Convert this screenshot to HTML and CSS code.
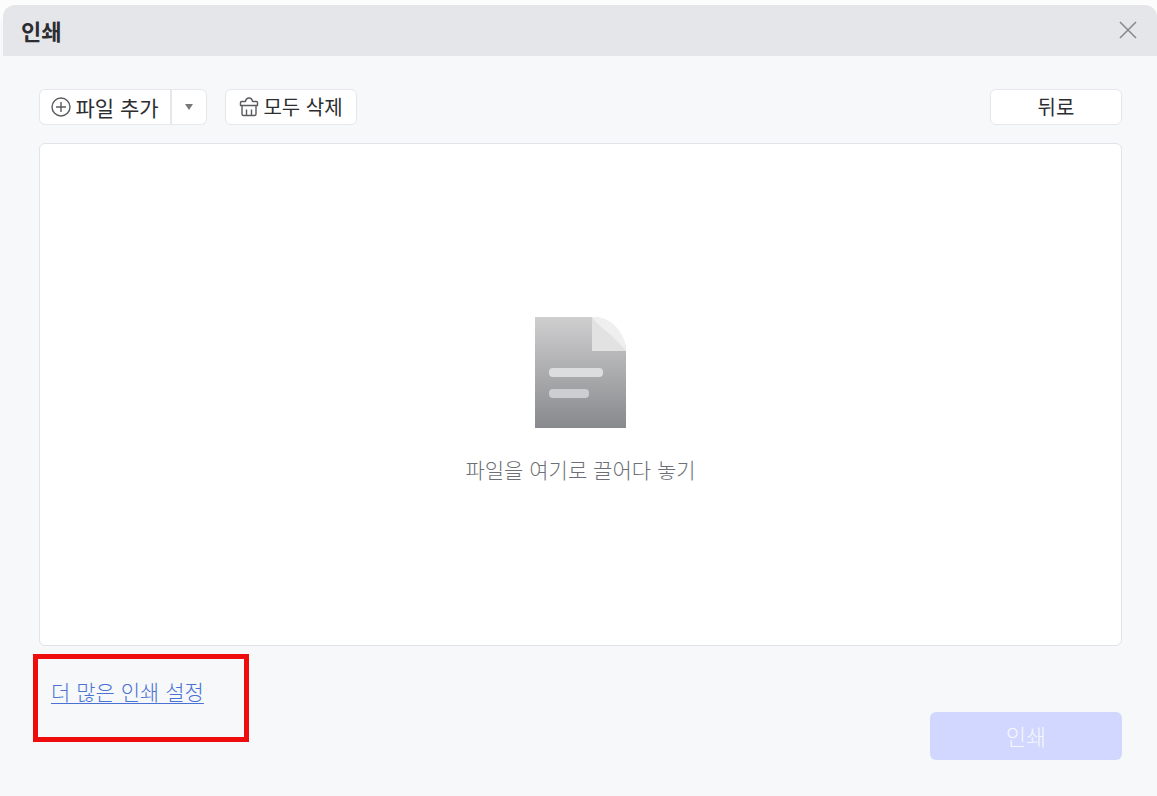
FILE: index.html
```html
<!DOCTYPE html>
<html lang="ko">
<head>
    <meta charset="UTF-8">
    <meta name="viewport" content="width=device-width, initial-scale=1.0">
    <title>인쇄</title>
    <link rel="stylesheet" href="styles.css">
</head>
<body>
    <div class="dialog">
        <!-- Title bar -->
        <header class="title-bar">
            <h1>인쇄</h1>
            <button class="close-btn" type="button" aria-label="닫기">
                <svg width="18" height="18" viewBox="0 0 18 18" fill="none" stroke="#88898d" stroke-width="1.6">
                    <path d="M1 1 L17 17 M17 1 L1 17"/>
                </svg>
            </button>
        </header>

        <!-- Toolbar -->
        <div class="toolbar">
            <div class="split-btn">
                <button class="btn add-btn" type="button">
                    <svg width="20" height="20" viewBox="0 0 20 20" fill="none" stroke="#5a5b5f" stroke-width="1.4">
                        <circle cx="10" cy="10" r="9"/>
                        <path d="M10 5 V15 M5 10 H15"/>
                    </svg>
                    파일 추가
                </button>
                <button class="btn arrow-btn" type="button" aria-label="추가 옵션">
                    <svg width="10" height="6" viewBox="0 0 10 6" fill="#77787b">
                        <path d="M1 0 H9 L5 6 Z"/>
                    </svg>
                </button>
            </div>
            <button class="btn clear-btn" type="button">
                <svg width="20" height="20" viewBox="0 0 20 20" fill="none" stroke="#5a5b5f" stroke-width="1.4" stroke-linejoin="round">
                    <path d="M1.5 8.5 V5.5 Q1.5 4.5 2.5 4.5 H6.5 Q7 1 10 1 Q13 1 13.5 4.5 H17.5 Q18.5 4.5 18.5 5.5 V8.5 Z"/>
                    <path d="M3 8.5 V17 Q3 18.5 4.5 18.5 H15.5 Q17 18.5 17 17 V8.5"/>
                    <path d="M7.5 12.5 V18.5 M12.5 12.5 V18.5"/>
                </svg>
                모두 삭제
            </button>
            <button class="btn back-btn" type="button">뒤로</button>
        </div>

        <!-- Drop area -->
        <main class="drop-area">
            <svg width="92" height="112" viewBox="0 0 92 112">
                <defs>
                    <linearGradient id="page" x1="0" y1="0" x2="0" y2="1">
                        <stop offset="0" stop-color="#cfcfd0"/>
                        <stop offset="1" stop-color="#88898c"/>
                    </linearGradient>
                </defs>
                <path d="M0 0 H59 Q71 0 81 12 Q91 23 91 34 V111 H0 Z" fill="url(#page)"/>
                <path d="M57 0 H61 Q75 2 91 34 H57 Z" fill="#e2e2e3"/>
                <path d="M57 0 Q73 -1 83 12 Q91 22 91 34 Q81 22 71 14 Q62 7 57 0 Z" fill="#efeff0"/>
                <rect x="14" y="51" width="54" height="9" rx="4" fill="#dcdddf"/>
                <rect x="14" y="72" width="40" height="9" rx="4" fill="#cccfd1"/>
            </svg>
            <p>파일을 여기로 끌어다 놓기</p>
        </main>

        <!-- Footer -->
        <footer class="footer">
            <div class="highlight">
                <a href="#">더 많은 인쇄 설정</a>
            </div>
            <button class="print-btn" type="button" disabled>인쇄</button>
        </footer>
    </div>
</body>
</html>
```

FILE: styles.css
```css
* {
    margin: 0;
    padding: 0;
    box-sizing: border-box;
}

body {
    font-family: "Noto Sans CJK KR", sans-serif;
    font-weight: 300;
    background-color: #fcfcfd;
    color: #2c2d30;
}

button {
    font: inherit;
    color: inherit;
    cursor: pointer;
}

.dialog {
    display: flex;
    flex-direction: column;
    min-height: 100vh;
    padding: 5px 0 0 3px;
    background: linear-gradient(#fcfcfd 20px, #f6f8fa 20px);
}

/* Title bar */
.title-bar {
    display: flex;
    align-items: center;
    justify-content: space-between;
    height: 51px;
    padding: 0 20px 2px 18px;
    background: #e5e6ea;
    border-radius: 12px 12px 0 0;
}

.title-bar h1 {
    font-size: 22px;
    font-weight: 700;
    line-height: 30px;
}

.close-btn {
    display: flex;
    background: none;
    border: none;
}

/* Toolbar */
.toolbar {
    display: flex;
    gap: 18px;
    padding: 33px 35px 18px 36px;
}

.btn {
    display: flex;
    align-items: center;
    justify-content: center;
    gap: 4px;
    height: 36px;
    background: #fff;
    border: 1px solid #e6e7eb;
    border-radius: 6px;
    font-size: 20px;
    font-weight: 400;
    line-height: 30px;
}

.split-btn {
    display: flex;
}

.add-btn {
    width: 133px;
    font-size: 21px;
    border-right-width: 2px;
    border-radius: 6px 0 0 6px;
}

.arrow-btn {
    width: 35px;
    border-left: none;
    border-radius: 0 6px 6px 0;
}

.clear-btn {
    width: 132px;
}

.back-btn {
    width: 132px;
    margin-left: auto;
}

/* Drop area */
.drop-area {
    flex: 1;
    display: flex;
    flex-direction: column;
    align-items: center;
    justify-content: center;
    gap: 24px;
    margin: 0 35px 0 36px;
    padding-top: 12px;
    background: #fff;
    border: 1px solid #e2e3e8;
    border-radius: 6px;
}

.drop-area p {
    font-size: 21px;
    line-height: 32px;
    color: #6c6f75;
}

/* Footer */
.footer {
    display: flex;
    align-items: flex-end;
    justify-content: space-between;
    padding: 8px 35px 36px 30px;
}

.highlight {
    width: 216px;
    height: 88px;
    margin-bottom: 18px;
    padding: 16px 13px;
    border: 5px solid #ee0c0c;
}

.highlight a {
    font-size: 21px;
    line-height: 32px;
    color: #4a72d4;
    white-space: nowrap;
    text-decoration-thickness: 1px;
    text-underline-offset: 3px;
}

.print-btn {
    width: 192px;
    height: 48px;
    padding-bottom: 2px;
    background: #d1d7fe;
    border: none;
    border-radius: 6px;
    font-size: 22px;
    color: #f6f7ff;
    cursor: default;
}
```
